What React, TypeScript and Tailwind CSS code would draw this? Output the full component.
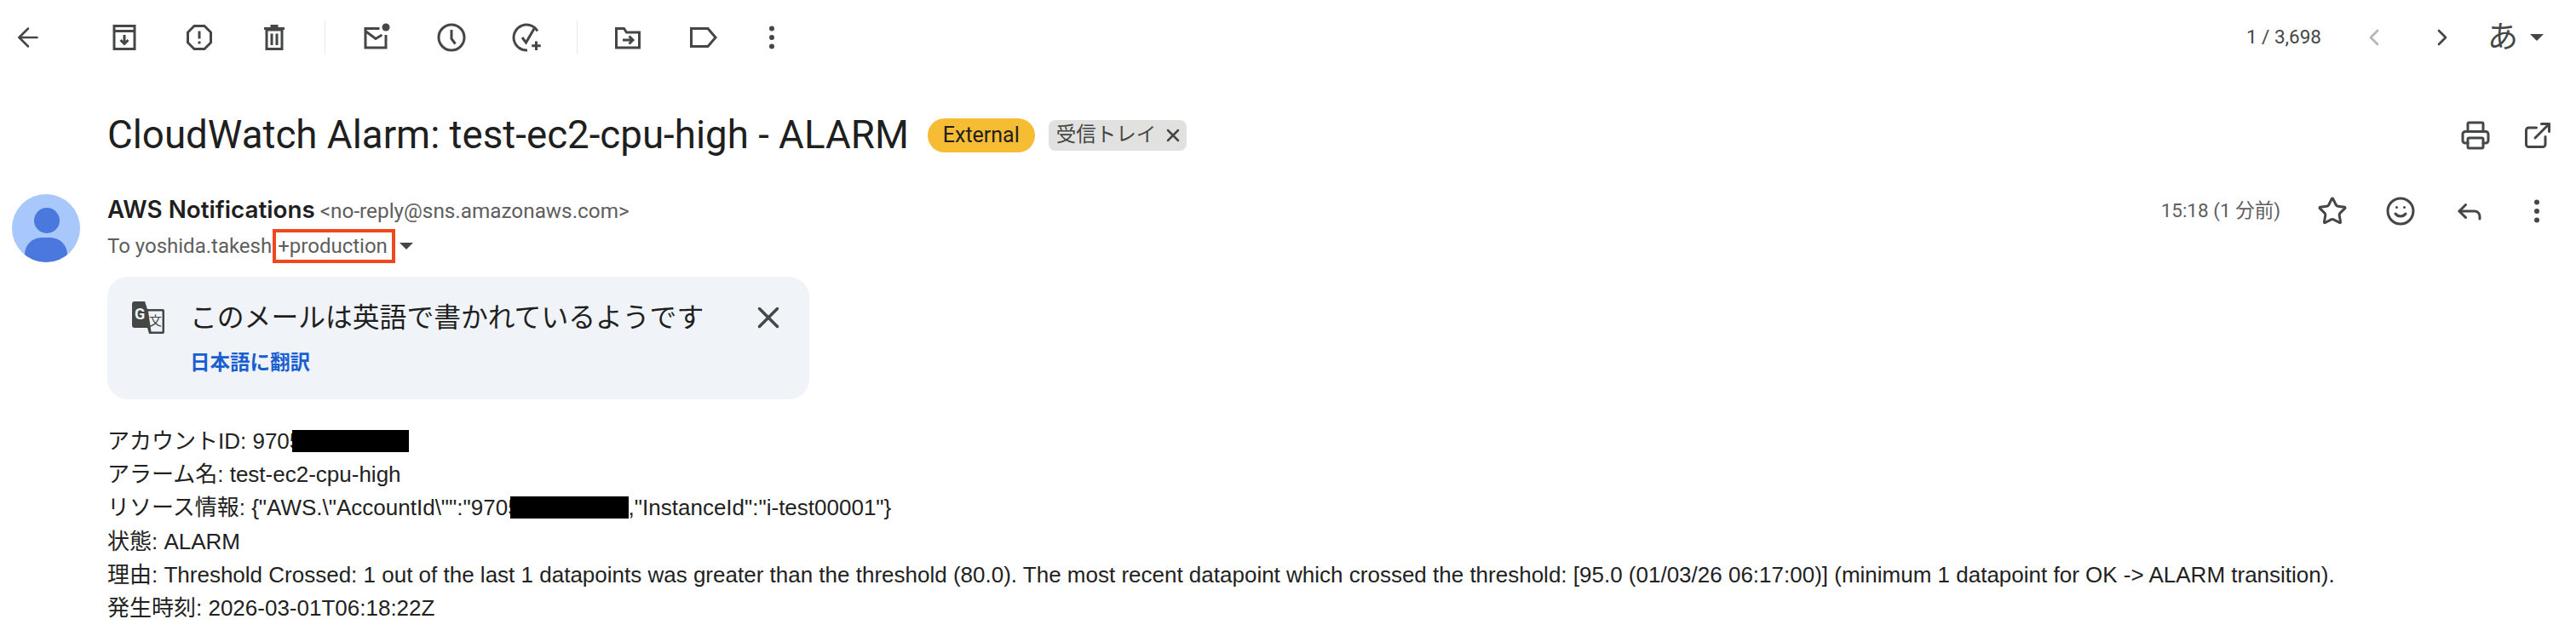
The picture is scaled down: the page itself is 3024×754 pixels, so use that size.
import { ArrowLeft, ChevronLeft, ChevronRight, EllipsisVertical, ExternalLink, Printer, Reply, Smile, Star, X } from 'lucide-react';

const gray = '#444746';

function Icon({ children, size = 36, className = '' }: { children: React.ReactNode; size?: number; className?: string }) {
  return (
    <svg width={size} height={size} viewBox="0 0 24 24" fill="none" stroke={gray} strokeWidth={2} className={className}>
      {children}
    </svg>
  );
}

function ToolbarSep() {
  return <div className="h-10 w-px bg-[#e8eaed]" />;
}

function Redacted({ className }: { className: string }) {
  return <span className={`inline-block h-[26px] translate-y-[4px] bg-black ${className}`} />;
}

const bodyLines = [
  <>アカウントID: 9705<Redacted className="-ml-[11px] w-[137px]" /></>,
  <>アラーム名: test-ec2-cpu-high</>,
  <>リソース情報: {'{"AWS.\\"AccountId\\"":"9705'}<Redacted className="-ml-[12px] w-[139px]" />{',"InstanceId":"i-test00001"}'}</>,
  <>状態: ALARM</>,
  <>理由: Threshold Crossed: 1 out of the last 1 datapoints was greater than the threshold (80.0). The most recent datapoint which crossed the threshold: [95.0 (01/03/26 06:17:00)] (minimum 1 datapoint for OK -&gt; ALARM transition).</>,
  <>発生時刻: 2026-03-01T06:18:22Z</>,
];

export default function App() {
  return (
    <div className="h-[754px] w-[3024px] overflow-hidden bg-white font-['Roboto','Noto_Sans_CJK_JP',sans-serif] text-[#1f1f1f]">
      <div className="flex h-[88px] items-center pl-[15px] pr-[38px]">
        <ArrowLeft size={36} color={gray} strokeWidth={1.7} />
        <div className="ml-[77px] flex items-center gap-[52px]">
          <Icon><path d="M4 3h16v18H4zM4 7h16M12 10v7M9 14l3 3 3-3" /></Icon>
          <Icon><path d="M8 3h8l5 5v8l-5 5H8l-5-5V8zM12 7v6M12 15v2" /></Icon>
          <Icon><path d="M6 6h12v15H6zM4 5h16M9 3h6M10 9v9M14 9v9" /></Icon>
        </div>
        <div className="ml-[41px]"><ToolbarSep /></div>
        <div className="ml-[41px] flex items-center gap-[53px]">
          <Icon><path d="M15 5H4v15h16V10M4 7l8 6 5-3" /><circle cx="20" cy="4" r="3" fill={gray} stroke="none" /></Icon>
          <Icon><circle cx="12" cy="12" r="10" /><path d="M12 6v7l3 4" /></Icon>
          <Icon><path d="M20 7A10 10 0 1 0 12 22M8 12l3 4 7-12M19 15v7M15.5 18.500h7" /></Icon>
        </div>
        <div className="ml-[40px]"><ToolbarSep /></div>
        <div className="ml-[41px] flex items-center gap-[52px]">
          <Icon><path d="M3 5h6l2 3h10v12H3zM8 14h8M13 11l3 3-3 3" /></Icon>
          <Icon><path d="M3 5h13l6 7-6 7H3z" /></Icon>
          <EllipsisVertical size={36} color={gray} className="-ml-[7px]" />
        </div>
        <div className="ml-auto flex items-center">
          <span className="text-[22.500px] text-[#444746]">1 / 3,698</span>
          <ChevronLeft size={32} color="#b5b5b5" className="ml-[46px]" />
          <ChevronRight size={32} color={gray} className="ml-[48px]" />
          <span className="ml-[37px] text-[36px] text-[#444746]">あ</span>
          <div className="ml-[14px] h-0 w-0 border-x-[8px] border-t-[8px] border-x-transparent border-t-[#444746]" />
        </div>
      </div>

      <div className="flex items-center pl-[126px] pr-[27px] pt-[43px]">
        <h1 className="text-[45.700px] font-normal leading-[56px]">CloudWatch Alarm: test-ec2-cpu-high - ALARM</h1>
        <span className="ml-[22px] flex h-[40px] items-center rounded-full bg-[#f5bc34] px-[18px] text-[25px]">External</span>
        <span className="ml-[16px] flex h-[36px] items-center gap-[8px] rounded-[8px] bg-[#e1e1e0] pl-[9px] pr-[4px] text-[23.500px] text-[#444746]">
          受信トレイ <X size={24} strokeWidth={2.5} />
        </span>
        <div className="ml-auto flex items-center gap-[37px]">
          <Printer size={36} color={gray} />
          <ExternalLink size={36} color={gray} />
        </div>
      </div>

      <div className="flex pl-[14px] pr-[28px] pt-[41px]">
        <div className="relative h-[80px] w-[80px] shrink-0 overflow-hidden rounded-full bg-[#a8c7fa]">
          <div className="absolute left-[26px] top-[16px] h-[30px] w-[30px] rounded-full bg-[#4a78dc]" />
          <div className="absolute left-[15px] top-[51px] h-[40px] w-[50px] rounded-full bg-[#4a78dc]" />
        </div>
        <div className="ml-[32px] flex-1">
          <div className="flex items-start justify-between">
            <div>
              <div className="flex items-baseline leading-[36px]">
                <span className="font-['Inter'] text-[27.800px] font-semibold">AWS Notifications</span>
                <span className="ml-[6px] text-[24.300px] text-[#5e5e5e]">&lt;no-reply@sns.amazonaws.com&gt;</span>
              </div>
              <div className="mt-[3px] flex items-center text-[24px] leading-[36px] text-[#5e5e5e]">
                <span>To yoshida.takesh</span>
                <span className="ml-[1px] flex h-[40px] items-center border-[4px] border-[#f0481c] pl-[2px] pr-[5px]">+production</span>
                <div className="ml-[5px] h-0 w-0 border-x-[8px] border-t-[8px] border-x-transparent border-t-[#444746]" />
              </div>
            </div>
            <div className="flex items-center pt-[2px]">
              <span className="text-[22.500px] text-[#5e5e5e]">15:18 (1 分前)</span>
              <Star size={36} color={gray} className="ml-[43px]" />
              <Smile size={36} color={gray} className="ml-[44px]" />
              <Reply size={36} color={gray} className="ml-[45px]" />
              <EllipsisVertical size={36} color={gray} className="ml-[43px]" />
            </div>
          </div>

          <div className="mt-[16px] h-[144px] w-[824px] rounded-[24px] bg-[#f0f4f9] pl-[29px] pr-[24px] pt-[24px]">
            <div className="flex items-center">
              <svg width="38" height="39" viewBox="0 0 38 39" className="shrink-0">
                <path d="M3 0h12l3 9h18a2 2 0 0 1 2 2v25a2 2 0 0 1-2 2H20l-2-7H3a3 3 0 0 1-3-3V3a3 3 0 0 1 3-3z" fill="#444746" />
                <path d="M19 11.500h16.500v24H22.500z" fill="#f0f4f9" />
                <text x="3" y="21" fontSize="18" fontWeight="700" fill="#f0f4f9" fontFamily="Roboto, sans-serif">G</text>
                <text x="20" y="28" fontSize="15" fill="#444746" fontFamily="'Noto Sans CJK JP', sans-serif">文</text>
              </svg>
              <span className="ml-[30px] text-[31.800px] leading-[48px]">このメールは英語で書かれているようです</span>
              <X size={42} color={gray} strokeWidth={2} className="ml-auto mr-[3px]" />
            </div>
            <div className="ml-[68px] mt-[13px] text-[23.500px] font-bold leading-[32px] text-[#1a5fd0]">日本語に翻訳</div>
          </div>
        </div>
      </div>

      <div className="pl-[126px] pt-[30px] font-['Liberation_Sans','Noto_Sans_CJK_JP',sans-serif] text-[26px] leading-[39.200px] text-[#222222]">
        {bodyLines.map((line, i) => (
          <div key={i}>{line}</div>
        ))}
      </div>
    </div>
  );
}
